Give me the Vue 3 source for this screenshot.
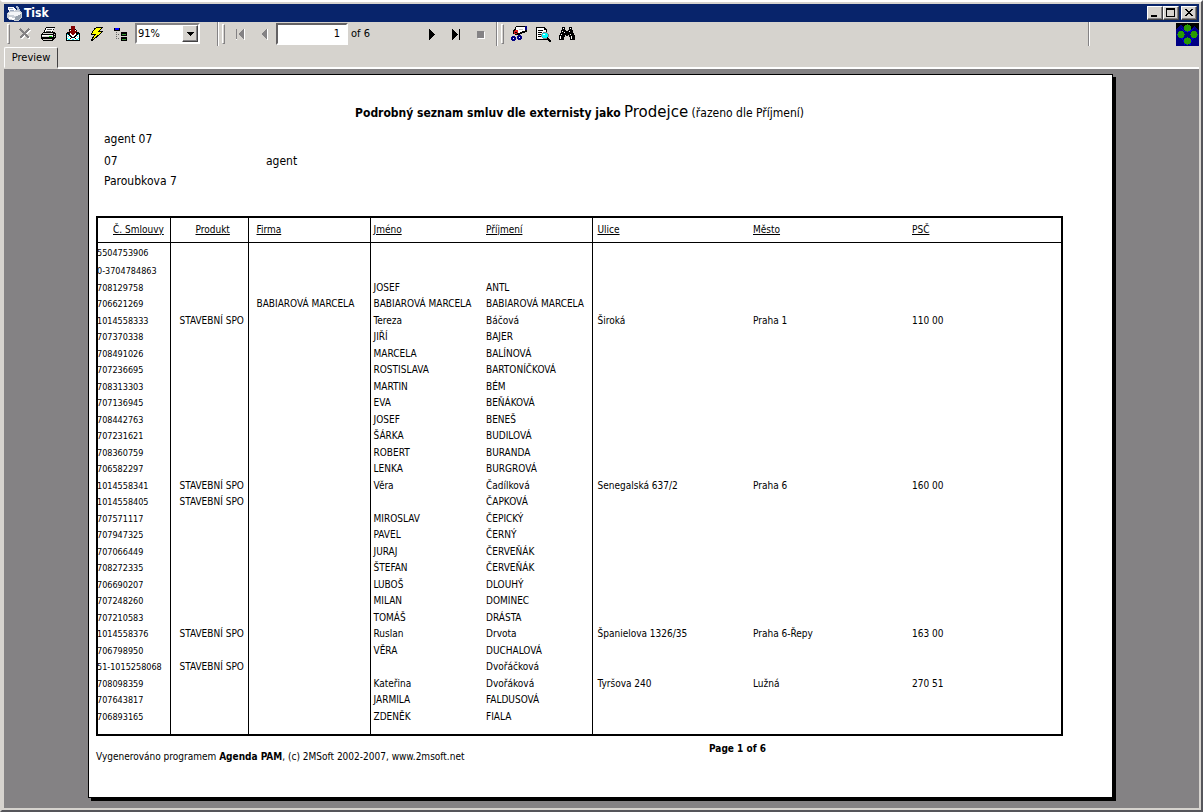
<script setup>
import { ref } from 'vue'

const zoom = ref('91%')
const pageNumber = ref('1')

const rows = [
  ['5504753906'],
  ['0-3704784863'],
  ['708129758', '', '', 'JOSEF', 'ANTL'],
  ['706621269', '', 'BABIAROVÁ MARCELA', 'BABIAROVÁ MARCELA', 'BABIAROVÁ MARCELA'],
  ['1014558333', 'STAVEBNÍ SPO', '', 'Tereza', 'Báčová', 'Široká', 'Praha 1', '110 00'],
  ['707370338', '', '', 'JIŘÍ', 'BAJER'],
  ['708491026', '', '', 'MARCELA', 'BALÍNOVÁ'],
  ['707236695', '', '', 'ROSTISLAVA', 'BARTONÍČKOVÁ'],
  ['708313303', '', '', 'MARTIN', 'BÉM'],
  ['707136945', '', '', 'EVA', 'BEŇÁKOVÁ'],
  ['708442763', '', '', 'JOSEF', 'BENEŠ'],
  ['707231621', '', '', 'ŠÁRKA', 'BUDILOVÁ'],
  ['708360759', '', '', 'ROBERT', 'BURANDA'],
  ['706582297', '', '', 'LENKA', 'BURGROVÁ'],
  ['1014558341', 'STAVEBNÍ SPO', '', 'Věra', 'Čadílková', 'Senegalská 637/2', 'Praha 6', '160 00'],
  ['1014558405', 'STAVEBNÍ SPO', '', '', 'ČAPKOVÁ'],
  ['707571117', '', '', 'MIROSLAV', 'ČEPICKÝ'],
  ['707947325', '', '', 'PAVEL', 'ČERNÝ'],
  ['707066449', '', '', 'JURAJ', 'ČERVEŇÁK'],
  ['708272335', '', '', 'ŠTEFAN', 'ČERVEŇÁK'],
  ['706690207', '', '', 'LUBOŠ', 'DLOUHÝ'],
  ['707248260', '', '', 'MILAN', 'DOMINEC'],
  ['707210583', '', '', 'TOMÁŠ', 'DRÁSTA'],
  ['1014558376', 'STAVEBNÍ SPO', '', 'Ruslan', 'Drvota', 'Španielova 1326/35', 'Praha 6-Řepy', '163 00'],
  ['706798950', '', '', 'VĚRA', 'DUCHALOVÁ'],
  ['51-1015258068', 'STAVEBNÍ SPO', '', '', 'Dvořáčková'],
  ['708098359', '', '', 'Kateřina', 'Dvořáková', 'Tyršova 240', 'Lužná', '270 51'],
  ['707643817', '', '', 'JARMILA', 'FALDUSOVÁ'],
  ['706893165', '', '', 'ZDENĚK', 'FIALA'],
]

const columns = ['number', 'product', 'company', 'first', 'last', 'street', 'city', 'zip']
const headings = ['Č. Smlouvy', 'Produkt', 'Firma', 'Jméno', 'Příjmení', 'Ulice', 'Město', 'PSČ']
</script>

<template>
  <div class="window">
    <header class="titlebar">
      <svg class="app-icon" width="16" height="16" viewBox="0 0 16 16" aria-hidden="true">
        <path d="M2 2h5l3 2v4H3z" fill="#fff" />
        <path d="M3 3h4v1H3zM4 5h4v1H4z" fill="#9aa7bd" />
        <path d="M1 8l3-2 9-1 3 3v5l-4 3-9-1-2-3z" fill="#c9cfd6" />
        <path d="M2 8l3-1 8 0 2 2-3 2-9-1z" fill="#f4f6f8" />
        <path d="M9 12l6-3v4l-3 2-3 0z" fill="#98a2ad" />
        <path d="M3 12l6 1-1 2-5-1z" fill="#fff" />
        <path d="M10 1l3 1 1 4-3-1z" fill="#a9b8cf" />
      </svg>
      <h1>Tisk</h1>
      <button type="button" class="cap" aria-label="Minimize">
        <svg width="12" height="10" viewBox="0 0 12 10"><path d="M2 7h6v2H2z" /></svg>
      </button>
      <button type="button" class="cap" aria-label="Maximize">
        <svg width="12" height="10" viewBox="0 0 12 10"><path d="M1 0h9v9H1zM2 2v6h7V2z" fill-rule="evenodd" /></svg>
      </button>
      <button type="button" class="cap close" aria-label="Close">
        <svg width="12" height="10" viewBox="0 0 12 10">
          <path d="M2 1h2v1h1v1h2V2h1V1h2v1H9v1H8v1H7v1h1v1h1v1h1v1H8V7H7V6H5v1H4v1H2V7h1V6h1V5h1V4H4V3H3V2H2z" />
        </svg>
      </button>
    </header>

    <div class="toolbar">
      <i class="grip"></i>
      <button type="button" class="tool" aria-label="Close view">
        <svg width="16" height="16" viewBox="0 0 16 16"><path d="M4 4l9 9M13 4l-9 9" stroke="#fff" stroke-width="2" /><path d="M3 3l9 9M12 3l-9 9" stroke="#848284" stroke-width="2" /></svg>
      </button>
      <button type="button" class="tool" aria-label="Print">
        <svg width="16" height="16" viewBox="0 0 16 16">
          <path d="M5 1h9v1h-1v2h-1v2h2v1h1v5h-1v1h-1v1h-1v1H2v-1H1v-1H0V8h1V7h1V6h1V4h1V2h1z" fill="#000" />
          <path d="M5 2h8v1h-1v2h-1v1H4V4h1z" fill="#fff" />
          <path d="M6 3h5v1H6zM5 5h5v1H5z" fill="#555" />
          <path d="M2 7h10v1H2zM1 9h11v2H1zM2 13h9v1H2z" fill="#d6d3ce" />
          <path d="M1 9h11v1H1z" fill="#fff" /><path d="M13 8h1v1h-1zM13 10h1v1h-1z" fill="#c6c3c6" />
          <path d="M8 10h3v1H8z" fill="#0c0" />
        </svg>
      </button>
      <button type="button" class="tool" aria-label="Export">
        <svg width="16" height="16" viewBox="0 0 16 16">
          <path d="M4 3h7v1h1v2h2v1h1v8H1V7h1V6h2z" fill="#000" />
          <path d="M5 4h6v5l-3 2-3-2zM2 8h1v1h1v1h1v1h1v1H5v1H4v1H2zM14 8h-1v1h-1v1h-1v1h-1v1h1v1h1v1h2zM6 12h4v1h1v1H5v-1h1z" fill="#fff" />
          <path d="M2 8h1v1H2zM3 10h1v1H3zM2 12h1v1H2zM13 8h1v1h-1zM12 10h1v1h-1zM13 12h1v1h-1zM3 13h2v1H3zM7 13h2v1H7zM11 13h2v1h-2z" fill="#0ff" />
          <path d="M6 0h4v5h2v1h-1v1h-1v1H9v1H7V8H6V7H5V6H4V5h2z" fill="#840000" />
        </svg>
      </button>
      <button type="button" class="tool" aria-label="Refresh">
        <svg width="16" height="16" viewBox="0 0 16 16">
          <path d="M7 1h7v1h-1v1h-1v1h-1v1h3v1h-1v1h-1v1h-1v1h-1v1H9v1H8v1H6v1H5v1H4v1H2v-2h1v-2h1v-1h1v-1H3V9H2V7h1V5h1V4h1V2h2z" fill="#000" />
          <path d="M7 2h5v1h-1v1h-1v1H9v1h3v1h-1v1h-1v1H8v1H7v1H6v1H5v1H4v-1h1v-2h1V9h1V8H3V7h1V5h1V4h1V3h1z" fill="#ff0" />
        </svg>
      </button>
      <button type="button" class="tool" aria-label="Toggle group tree">
        <svg width="16" height="16" viewBox="0 0 16 16">
          <path d="M1 2h6v3H1z" fill="#000" /><path d="M2 2h4v2H2z" fill="#00f" />
          <path d="M3 6h1v1H3zM3 8h1v1H3zM5 8h1v1H5zM3 10h1v1H3zM3 12h1v1H3zM5 12h1v1H5z" fill="#666" />
          <path d="M8 6h6v4H8zM8 11h6v4H8z" fill="#000" />
          <path d="M9 8h4v1H9zM9 13h4v1H9z" fill="#2f9a2f" />
        </svg>
      </button>

      <div class="combo">
        <select v-model="zoom" aria-label="Zoom"><option>91%</option><option>100%</option></select>
        <span class="drop"><svg width="7" height="4" viewBox="0 0 7 4"><path d="M0 0h7v1H6v1H5v1H4v1H3V3H2V2H1V1H0z" /></svg></span>
      </div>

      <i class="divider"></i><i class="grip"></i>
      <button type="button" class="tool" aria-label="First page">
        <svg width="16" height="16" viewBox="0 0 16 16"><path d="M5 3v11H4M13 3v11h-1V3z" fill="#fff" /><path d="M4 3h1v10H4zM12 3v10h-1v-1h-1v-1H9v-1H8V9H7V7h1V6h1V5h1V4h1V3z" fill="#848284" /></svg>
      </button>
      <button type="button" class="tool" aria-label="Previous page">
        <svg width="16" height="16" viewBox="0 0 16 16"><path d="M11 3h1v11h-1z" fill="#fff" /><path d="M11 3v10h-1v-1H9v-1H8v-1H7V9H6V7h1V6h1V5h1V4h1V3z" fill="#848284" /></svg>
      </button>
      <label class="pager">
        <input v-model="pageNumber" type="text" aria-label="Page number" />
        <span>of 6</span>
      </label>
      <button type="button" class="tool" aria-label="Next page">
        <svg width="16" height="16" viewBox="0 0 16 16"><path d="M5 3h1v1h1v1h1v1h1v1h1v1h1v1h-1v1H9v1H8v1H7v1H6v1H5z" /></svg>
      </button>
      <button type="button" class="tool" aria-label="Last page">
        <svg width="16" height="16" viewBox="0 0 16 16"><path d="M4 3h1v1h1v1h1v1h1v1h1v1h1v1H9v1H8v1H7v1H6v1H5v1H4zM11 3h1v11h-1z" /></svg>
      </button>
      <button type="button" class="tool" aria-label="Stop">
        <svg width="16" height="16" viewBox="0 0 16 16"><path d="M6 6h7v7H6z" fill="#fff" /><path d="M5 5h7v7H5z" fill="#848284" /></svg>
      </button>

      <i class="divider near"></i><i class="grip"></i>
      <button type="button" class="tool" aria-label="Search expert">
        <svg width="16" height="16" viewBox="0 0 16 16">
          <path d="M5 0h11v6h-2v1h-3v1H9v1H4V8H2V4h1V3h1V1h1z" fill="#000" />
          <path d="M5 1h9v4h-3v1H9v1H7V4H5z" fill="#fff" /><path d="M8 3h4v1H8z" fill="#c6c3c6" />
          <path d="M4 4h3v3H6v1H3V5h1z" fill="#e02020" /><path d="M4 6h2v1H4z" fill="#000" />
          <path d="M14 0h2v4h-2z" fill="#000084" />
          <path d="M1 10h3v1h1v3H4v1H1v-1H0v-3h1zM7 9h3v1h1v3h-1v1H7v-1H6v-3h1z" fill="#000084" />
          <path d="M2 12h1v1H2zM8 11h1v1H8z" fill="#fff" />
        </svg>
      </button>
      <button type="button" class="tool" aria-label="Preview search">
        <svg width="16" height="16" viewBox="0 0 16 16">
          <path d="M1 1h9v1h1v1h1v11H1z" fill="#000" /><path d="M2 2h7v2h2v9H2z" fill="#fff" />
          <path d="M3 4h5v1H3zM3 6h4v1H3zM3 8h3v1H3zM3 10h3v1H3z" fill="#000" />
          <path d="M8 6h4v1h1v1h1v3h-1v2H8v-1H7v-1H6V8h1V7h1z" fill="#848284" />
          <path d="M8 7h4v1h1v3h-1v1H8v-1H7V8h1z" fill="#0ff" /><path d="M8 8h2v1H8z" fill="#fff" />
          <path d="M12 11h1v1h1v1h1v1h1v2h-2v-1h-1v-1h-1z" fill="#000" />
        </svg>
      </button>
      <button type="button" class="tool" aria-label="Find">
        <svg width="16" height="16" viewBox="0 0 16 16">
          <path d="M3 1h3v3h1v1h2V4h1V1h3v3h1v3h1v2h1v5h-5v-3h-1V9H9v1H7V9H6v2H5v3H0V9h1V7h1V4h1z" fill="#000" />
          <path d="M4 2h1v1H4zM11 2h1v1h-1zM3 5h1v1H3zM10 5h1v1h-1zM2 8h1v1H2zM1 10h1v3H1zM5 6h1v1H5zM11 8h1v1h-1zM12 10h1v3h-1z" fill="#fff" />
        </svg>
      </button>

      <i class="divider far"></i>
      <svg class="brand" width="23" height="23" viewBox="0 0 23 23" aria-hidden="true">
        <path d="M0 0h23v23H0z" fill="#000" />
        <path d="M0 6l5-4 5 5h4l4-4 5 4v16H0z" fill="#000084" />
        <path d="M1 12q6 2 8 10M3 11q7 3 8 11M22 12q-6 2-8 10M20 11q-6 3-7 11M5 5q6 8 13 0" fill="none" stroke="#0000d6" />
        <g fill="#299a00"><circle cx="11.500" cy="5" r="3.600" /><circle cx="5" cy="11.500" r="3.600" /><circle cx="18" cy="11.500" r="3.600" /><circle cx="11.500" cy="18" r="3.600" /></g>
      </svg>
    </div>

    <nav class="tabs"><button type="button" class="tab">Preview</button></nav>

    <main class="viewer">
      <article class="sheet">
        <h2><strong>Podrobný seznam smluv dle externisty jako</strong> <span class="role">Prodejce</span> (řazeno dle Příjmení)</h2>
        <div class="agent">
          <p>agent 07</p>
          <p class="pair"><span>07</span><span>agent</span></p>
          <p>Paroubkova 7</p>
        </div>
        <table>
          <colgroup><col v-for="c in columns" :key="c" :class="'w-' + c" /></colgroup>
          <thead>
            <tr><th v-for="(h, i) in headings" :key="h" scope="col" :class="columns[i]"><u>{{ h }}</u></th></tr>
          </thead>
          <tbody>
            <tr v-for="row in rows" :key="row[0]"><td v-for="(c, i) in columns" :key="c" :class="c">{{ row[i] }}</td></tr>
          </tbody>
          <tfoot>
            <tr><td v-for="c in columns" :key="c" :class="c"></td></tr>
          </tfoot>
        </table>
        <footer>
          <p class="made">Vygenerováno programem <strong>Agenda PAM</strong>, (c) 2MSoft 2002-2007, www.2msoft.net</p>
          <p class="count">Page 1 of 6</p>
        </footer>
      </article>
    </main>
  </div>
</template>

<style>
body { background: #d6d3ce; }
</style>

<style scoped>
* { box-sizing: border-box; }
.window {
  min-height: 100vh;
  display: flex;
  flex-direction: column;
  padding: 2px;
  background: #d6d3ce;
  border: 2px solid;
  border-color: #fff #55555a #55555a #d6d3ce;
  color: #000;
  font: 11px/14px "DejaVu Sans Condensed", "Noto Sans", sans-serif;
}
h1, h2, p { margin: 0; }
button { font: inherit; color: inherit; padding: 0; }
svg { display: block; shape-rendering: crispEdges; }

.titlebar {
  display: flex;
  align-items: center;
  height: 18px;
  padding: 0 2px;
  background: #08246b;
}
h1 { flex: 1; margin-left: 2px; color: #fff; font-size: 12px; line-height: 18px; }
.cap {
  width: 16px;
  height: 14px;
  background: #d6d3ce;
  border: 1px solid;
  border-color: #fff #424142 #424142 #fff;
  box-shadow: inset -1px -1px #848284;
}
.cap.close { margin-left: 2px; }
.cap svg { margin-left: 1px; }

.toolbar { display: flex; align-items: center; height: 25px; padding-bottom: 2px; }
.grip {
  width: 3px;
  height: 20px;
  margin: 0 3px;
  border: 1px solid;
  border-color: #fff #848284 #848284 #fff;
}
.divider { width: 2px; height: 24px; background: #848284; border-right: 1px solid #fff; margin-left: 17px; }
.divider.near { margin-left: 4px; }
.divider.far { margin-left: auto; margin-right: 86px; }
.brand { margin-top: 2px; }
.tool {
  width: 24px;
  height: 22px;
  display: grid;
  place-items: center;
  background: none;
  border: 0;
}
.combo {
  display: flex;
  align-items: stretch;
  width: 65px;
  height: 21px;
  margin-left: 2px;
  border: 2px solid;
  border-color: #848284 #fff #fff #848284;
  background: #fff;
}
.combo select {
  flex: 1;
  min-width: 0;
  appearance: none;
  border: 0;
  padding: 0 0 0 1px;
  background: none;
  font: inherit;
  color: #000;
}
.drop {
  display: grid;
  place-items: center;
  width: 16px;
  background: #d6d3ce;
  border: 1px solid;
  border-color: #fff #424142 #424142 #fff;
  box-shadow: inset -1px -1px #848284;
  pointer-events: none;
}
.pager { display: flex; align-items: center; width: 144px; }
.pager input {
  width: 72px;
  height: 22px;
  margin-right: 3px;
  padding: 0 6px;
  border: 2px solid;
  border-color: #636163 #fff #fff #636163;
  background: #fff;
  font: inherit;
  text-align: right;
}

.tabs { display: flex; height: 22px; border-bottom: 2px solid #fff; }
.tab {
  width: 54px;
  height: 21px;
  background: #d6d3ce;
  border: 1px solid;
  border-color: #fff #424142 #d6d3ce #fff;
  border-radius: 2px 2px 0 0;
  box-shadow: 0 1px #d6d3ce;
}

.viewer { flex: 1; padding: 5px 86px 10px 84px; background: #848284; }
.sheet {
  min-height: 724px;
  padding: 26px 49px 20px 7px;
  background: #fff;
  border: 1px solid #000;
  box-shadow: 3px 3px #000;
}
h2 { text-align: center; font-size: 12px; line-height: 22px; font-weight: normal; }
.role { font-family: "DejaVu Sans", sans-serif; font-size: 15px; }
.agent { padding: 5px 8px 0; font-size: 12px; line-height: 20px; }
.pair { display: flex; margin: 2px 0 0; }
.pair span:first-child { width: 162px; }

table {
  width: 100%;
  margin-top: 25px;
  table-layout: fixed;
  border-collapse: collapse;
  border: 2px solid #000;
  font-size: 10px;
  line-height: 12px;
}
th, td { padding: 0; overflow: hidden; white-space: nowrap; text-align: left; font-weight: normal; }
th { height: 25px; border-bottom: 1px solid #000; }
tbody tr { height: 17px; }
tbody tr:nth-child(even) { height: 16px; }
tbody tr:first-child { height: 21px; }
tfoot tr { height: 10px; }
td.number { font-size: 9px; text-indent: -1px; }
.w-number { width: 73px; }
.w-product { width: 78px; }
.w-company { width: 122px; }
.w-first { width: 113px; }
.w-last { width: 109px; }
.w-street { width: 156px; }
.w-city { width: 159px; }
.product, .company, .first, .street { border-left: 1px solid #000; }
.product { padding-left: 9px; }
.company { padding-left: 8px; }
.first { padding-left: 3px; }
.last { padding-left: 3px; }
.street { padding-left: 5px; }
.city { padding-left: 5px; }
.zip { padding-left: 5px; }
th.number { padding-left: 15px; }
th.product { padding-left: 25px; }

footer { display: flex; margin-top: 6px; font-size: 10px; line-height: 14px; }
.made { width: 613px; padding-top: 8px; }
.count { font-weight: bold; }
</style>
